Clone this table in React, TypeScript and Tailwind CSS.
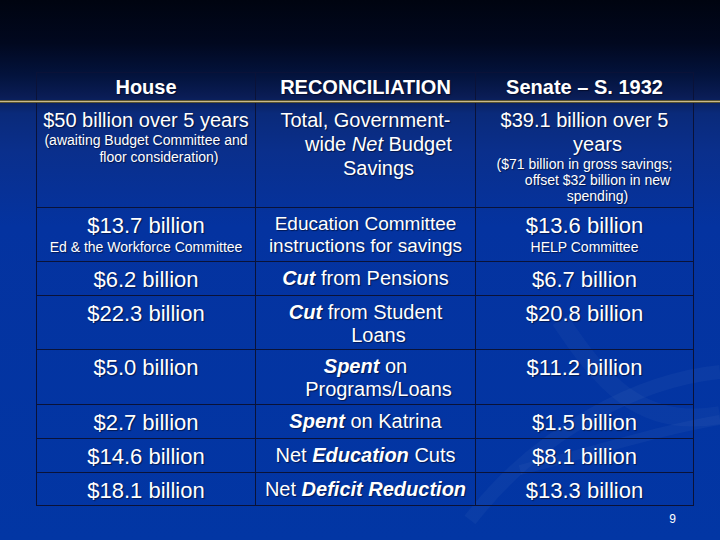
import React from "react";

const font = { fontFamily: '"Liberation Sans", Arial, sans-serif' };

function BI({ children }: { children: React.ReactNode }) {
  return <span className="font-bold italic">{children}</span>;
}

function Row({
  h,
  cells,
}: {
  h: string;
  cells: React.ReactNode[];
}) {
  return (
    <div className={`grid grid-cols-[219px_220px_218px] border-b border-[#0a1238] ${h}`}>
      {cells.map((c, i) => (
        <div key={i} className="border-r border-[#0a1238] pt-[5px] text-center">
          {c}
        </div>
      ))}
    </div>
  );
}

const Big = ({ children }: { children: React.ReactNode }) => (
  <div className="text-[22px] leading-[26px]">{children}</div>
);
const Small = ({ children, indent }: { children: React.ReactNode; indent?: boolean }) => (
  <div className={`text-[14px] leading-[16.5px] ${indent ? "pl-[26px]" : ""}`}>{children}</div>
);
const Mid = ({ children, indent }: { children: React.ReactNode; indent?: boolean }) => (
  <div className={`text-[20px] leading-[23px] ${indent ? "pl-[26px]" : ""}`}>{children}</div>
);

export default function App() {
  return (
    <div
      className="relative w-[720px] h-[540px] overflow-hidden text-white bg-[linear-gradient(to_bottom,#000410_0%,#01081f_8%,#03133d_14%,#0a1d56_18%,#0a2a7a_21%,#0a2f8c_28%,#0433a0_42%,#0236a4_100%)] [text-shadow:1px_1px_1px_rgba(0,0,20,0.55)]"
      style={font}
    >
      <svg className="absolute inset-0" width="720" height="540" viewBox="0 0 720 540">
        <path d="M470 520 C 540 430, 640 380, 720 372" stroke="#ffffff" strokeOpacity="0.035" strokeWidth="14" fill="none" />
        <path d="M560 320 C 600 380, 640 430, 720 415" stroke="#ffffff" strokeOpacity="0.03" strokeWidth="18" fill="none" />
        <path d="M520 470 C 600 450, 660 430, 720 420" stroke="#ffffff" strokeOpacity="0.035" strokeWidth="10" fill="none" />
      </svg>

      <div className="relative pt-[72px] pl-[36px]">
        <div className="w-[658px] border-l border-t border-[#0a1238]">
          <div className="grid grid-cols-[219px_220px_218px] h-[30px] border-b-[3px] border-[#c9ba8c]">
            {["House", "RECONCILIATION", "Senate – S. 1932"].map((t) => (
              <div
                key={t}
                className="border-r border-[#0a1238] flex items-center justify-center text-[20px] font-bold leading-[24px]"
              >
                {t}
              </div>
            ))}
          </div>

          <Row
            h="h-[105px]"
            cells={[
              <div key="a">
                <div className="text-[20px] leading-[24px]">$50 billion over 5 years</div>
                <Small>(awaiting Budget Committee and</Small>
                <Small indent>floor consideration)</Small>
              </div>,
              <div key="b" className="text-[20px] leading-[24px]">
                <div>Total, Government-</div>
                <div className="pl-[26px]">
                  wide <span className="italic">Net</span> Budget
                </div>
                <div className="pl-[26px]">Savings</div>
              </div>,
              <div key="c">
                <div className="text-[20px] leading-[24px]">$39.1 billion over 5</div>
                <div className="text-[20px] leading-[24px] pl-[26px]">years</div>
                <div className="text-[14px] leading-[16px]">($71 billion in gross savings;</div>
                <div className="text-[14px] leading-[16px] pl-[26px]">offset $32 billion in new</div>
                <div className="text-[14px] leading-[16px] pl-[26px]">spending)</div>
              </div>,
            ]}
          />

          <Row
            h="h-[54px]"
            cells={[
              <div key="a">
                <Big>$13.7 billion</Big>
                <Small>Ed &amp; the Workforce Committee</Small>
              </div>,
              <div key="b" className="text-[19px] leading-[22px]">
                <div>Education Committee</div>
                <div>instructions for savings</div>
              </div>,
              <div key="c">
                <Big>$13.6 billion</Big>
                <Small>HELP Committee</Small>
              </div>,
            ]}
          />

          <Row
            h="h-[34px]"
            cells={[
              <Big key="a">$6.2 billion</Big>,
              <Mid key="b">
                <BI>Cut</BI> from Pensions
              </Mid>,
              <Big key="c">$6.7 billion</Big>,
            ]}
          />

          <Row
            h="h-[54px]"
            cells={[
              <Big key="a">$22.3 billion</Big>,
              <div key="b">
                <Mid>
                  <BI>Cut</BI> from Student
                </Mid>
                <Mid indent>Loans</Mid>
              </div>,
              <Big key="c">$20.8 billion</Big>,
            ]}
          />

          <Row
            h="h-[55px]"
            cells={[
              <Big key="a">$5.0 billion</Big>,
              <div key="b">
                <Mid>
                  <BI>Spent</BI> on
                </Mid>
                <Mid indent>Programs/Loans</Mid>
              </div>,
              <Big key="c">$11.2 billion</Big>,
            ]}
          />

          <Row
            h="h-[34px]"
            cells={[
              <Big key="a">$2.7 billion</Big>,
              <Mid key="b">
                <BI>Spent</BI> on Katrina
              </Mid>,
              <Big key="c">$1.5 billion</Big>,
            ]}
          />

          <Row
            h="h-[34px]"
            cells={[
              <Big key="a">$14.6 billion</Big>,
              <Mid key="b">
                Net <BI>Education</BI> Cuts
              </Mid>,
              <Big key="c">$8.1 billion</Big>,
            ]}
          />

          <Row
            h="h-[33px]"
            cells={[
              <Big key="a">$18.1 billion</Big>,
              <Mid key="b">
                Net <BI>Deficit Reduction</BI>
              </Mid>,
              <Big key="c">$13.3 billion</Big>,
            ]}
          />
        </div>

        <div className="w-[640px] text-right text-[12px] leading-[14px] mt-[6px] [text-shadow:none]">9</div>
      </div>

      <div className="absolute left-0 top-[100px] w-[720px] h-[3px] bg-[#c9ba8c] border-y border-[#5a5430]" />
    </div>
  );
}
